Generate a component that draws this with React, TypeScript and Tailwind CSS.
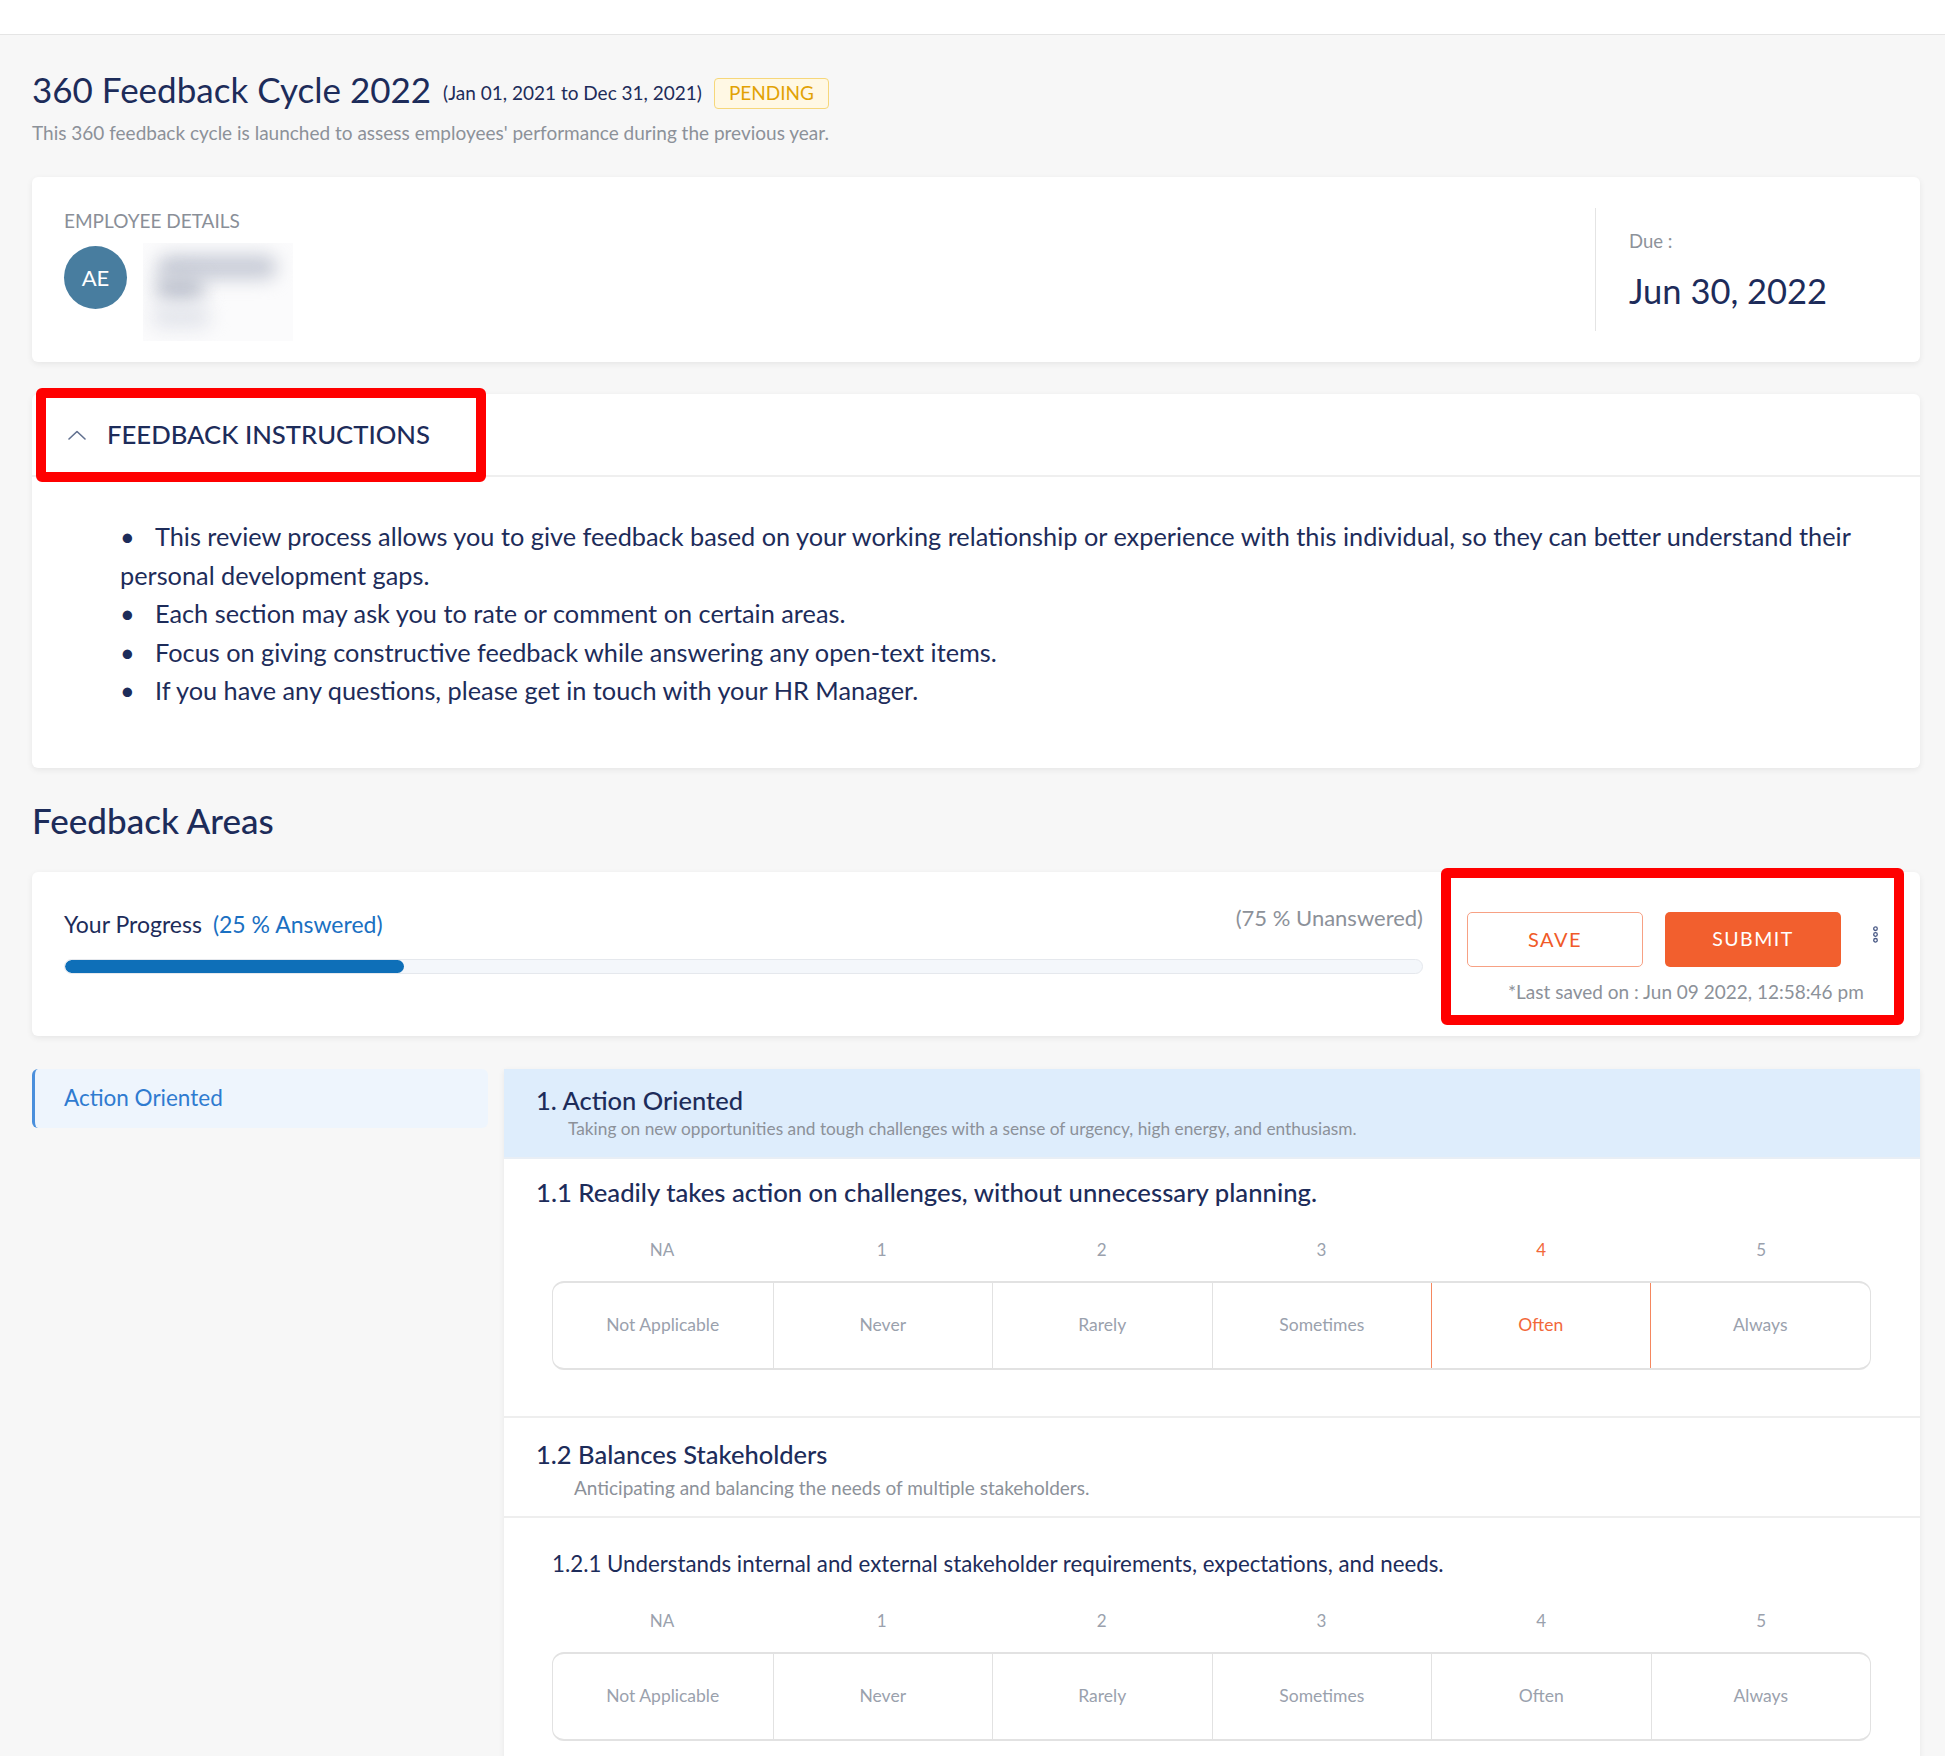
import React from "react";

const navy = "text-[#1d2c5a]";

function RatingRow({ selected }: { selected?: number }) {
  const nums = ["NA", "1", "2", "3", "4", "5"];
  const labels = ["Not Applicable", "Never", "Rarely", "Sometimes", "Often", "Always"];
  return (
    <div className="pl-[48px] pr-[49px]">
      <div className="grid grid-cols-6 h-[31px] items-center">
        {nums.map((n, i) => (
          <div
            key={n}
            className={`text-center text-[17px] ${i === selected ? "text-[#f2683a]" : "text-[#9aa1ad]"}`}
          >
            {n}
          </div>
        ))}
      </div>
      <div className="mt-[15px] grid grid-cols-6 h-[89px] rounded-[12px] border border-[#e2e2e2] border-t-2 border-b-2 overflow-hidden">
        {labels.map((l, i) => (
          <div
            key={l}
            className={`flex items-center justify-center text-[17.5px] ${
              i === selected
                ? "text-[#f2683a] border border-[#f5875f] border-t-2 border-b-2 -mt-[2px] -mb-[2px]"
                : `text-[#9aa1ad] ${i > 0 && i - 1 !== selected ? "border-l border-[#e2e2e2]" : ""}`
            }`}
          >
            {l}
          </div>
        ))}
      </div>
    </div>
  );
}

export default function App() {
  return (
    <div className="min-h-screen bg-[#f7f7f7] font-['Lato','Noto_Sans',sans-serif]">
      <div className="h-[35px] bg-white border-b border-[#e5e5e5]" />
      <div className="pl-[32px] pr-[25px]">
        {/* Title */}
        <div className="pt-[33px] flex items-center">
          <h1 className={`text-[35px] leading-[42px] ${navy}`}>360 Feedback Cycle 2022</h1>
          <span className={`ml-[12px] mt-[8px] text-[19px] ${navy}`}>(Jan 01, 2021 to Dec 31, 2021)</span>
          <span className="ml-[12px] mt-[8px] h-[31px] px-[14px] flex items-center rounded-[4px] border border-[#f6d77a] bg-[#fff8e4] text-[19px] text-[#e2a204]">
            PENDING
          </span>
        </div>
        <p className="mt-[11px] text-[19px] leading-[23px] text-[#8c9199]">
          This 360 feedback cycle is launched to assess employees' performance during the previous year.
        </p>

        {/* Employee card */}
        <div className="mt-[33px] h-[185px] bg-white rounded-[6px] shadow-[0_2px_6px_rgba(0,0,0,0.07)] flex">
          <div className="flex-1 pl-[32px] pt-[32px]">
            <div className="text-[19px] leading-[23px] text-[#8a8f98]">EMPLOYEE DETAILS</div>
            <div className="mt-[11px] flex items-start">
              <div className="mt-[3px] w-[63px] h-[63px] rounded-full bg-[#487d9f] flex items-center justify-center text-white text-[22px]">
                AE
              </div>
              <div className="ml-[16px] w-[150px] h-[98px] bg-[#fbfbfc] relative overflow-hidden">
                <div className="absolute left-[14px] top-[12px] w-[120px] h-[24px] rounded-full bg-[#c7cbd6] blur-[9px]" />
                <div className="absolute left-[12px] top-[30px] w-[50px] h-[30px] rounded-full bg-[#c3c7d2] blur-[9px]" />
                <div className="absolute left-[8px] top-[62px] w-[60px] h-[24px] rounded-full bg-[#e4e6ec] blur-[9px]" />
              </div>
            </div>
          </div>
          <div className="my-[31px] w-px bg-[#e4e4e4]" />
          <div className="w-[324px] pl-[33px] pt-[53px]">
            <div className="text-[18.5px] leading-[22px] text-[#8d929a]">Due :</div>
            <div className={`mt-[18px] text-[34.5px] leading-[42px] ${navy}`}>Jun 30, 2022</div>
          </div>
        </div>

        {/* Instructions card */}
        <div className="mt-[32px] bg-white rounded-[6px] shadow-[0_2px_6px_rgba(0,0,0,0.07)] relative">
          <div className="h-[83px] border-b-2 border-[#efefef] flex items-center pl-[36px]">
            <svg width="18" height="10" viewBox="0 0 18 10" fill="none">
              <path d="M1 9 L9 1.5 L17 9" stroke="#61708f" strokeWidth="1.6" strokeLinejoin="round" strokeLinecap="round" />
            </svg>
            <span className={`ml-[21px] text-[25.7px] font-medium ${navy}`}>FEEDBACK INSTRUCTIONS</span>
          </div>
          <ul className={`pl-[88px] pr-[60px] pt-[40px] pb-[58px] text-[25.3px] leading-[38.5px] ${navy}`}>
            <li>
              <span className="inline-block w-[35px]">•</span>This review process allows you to give feedback based on your working relationship or experience with this individual, so they can better understand their personal development gaps.
            </li>
            <li>
              <span className="inline-block w-[35px]">•</span>Each section may ask you to rate or comment on certain areas.
            </li>
            <li>
              <span className="inline-block w-[35px]">•</span>Focus on giving constructive feedback while answering any open-text items.
            </li>
            <li>
              <span className="inline-block w-[35px]">•</span>If you have any questions, please get in touch with your HR Manager.
            </li>
          </ul>
          <div className="absolute left-[4px] top-[-6px] w-[450px] h-[94px] border-[10px] border-[#ff0000] rounded-[6px] pointer-events-none" />
        </div>

        {/* Feedback Areas */}
        <h2 className={`mt-[31px] text-[35px] leading-[42px] font-medium ${navy}`}>Feedback Areas</h2>

        <div className="mt-[31px] h-[164px] bg-white rounded-[6px] shadow-[0_2px_6px_rgba(0,0,0,0.07)] relative flex">
          <div className="pl-[32px] w-[1391px] pt-[38px]">
            <div className="flex items-start justify-between h-[28px]">
              <div className="text-[23px] leading-[28px]">
                <span className={navy}>Your Progress</span>
                <span className="ml-[11px] text-[#1a70c2]">(25 % Answered)</span>
              </div>
              <div className="text-[22px] leading-[28px] -mt-[6px] text-[#8c9199]">(75 % Unanswered)</div>
            </div>
            <div className="mt-[21px] h-[15px] rounded-full bg-[#f4f7fb] border border-[#e5e8ed] overflow-hidden">
              <div className="h-full rounded-full bg-[#0e6fb8]" style={{ width: "25%" }} />
            </div>
          </div>
          <div className="flex-1 pl-[44px] pt-[40px]">
            <div className="flex items-start">
              <button className="w-[176px] h-[55px] rounded-[5px] border border-[#f7a184] text-[#f05a28] text-[20px] tracking-[1.5px]">
                SAVE
              </button>
              <button className="ml-[22px] w-[176px] h-[55px] rounded-[5px] bg-[#f25f2e] text-white text-[19.5px] tracking-[1.5px]">
                SUBMIT
              </button>
              <svg className="ml-[31px] mt-[14px]" width="7" height="17" viewBox="0 0 7 17" fill="none">
                <circle cx="3.5" cy="2.7" r="1.8" stroke="#4a5a86" strokeWidth="1.3" />
                <circle cx="3.5" cy="8.5" r="1.8" stroke="#4a5a86" strokeWidth="1.3" />
                <circle cx="3.5" cy="14.3" r="1.8" stroke="#4a5a86" strokeWidth="1.3" />
              </svg>
            </div>
            <div className="mt-[13px] pl-[41px] text-[19px] leading-[23px] text-[#8c9199] whitespace-nowrap">
              *Last saved on : Jun 09 2022, 12:58:46 pm
            </div>
          </div>
          <div className="absolute right-[16px] top-[-4px] w-[463px] h-[157px] border-[10px] border-[#ff0000] rounded-[6px] pointer-events-none" />
        </div>

        {/* Areas */}
        <div className="mt-[33px] flex gap-[16px] items-start">
          <div className="w-[456px] h-[59px] rounded-[6px] bg-[#eef5fd] border-l-[3px] border-[#4a8fdc] flex items-center pl-[29px] text-[22.5px] text-[#2f7bd0]">
            Action Oriented
          </div>
          <div className="flex-1 bg-white shadow-[0_2px_6px_rgba(0,0,0,0.07)]">
            <div className="h-[90px] bg-[#deedfc] pl-[32px] pt-[15px] border-b-2 border-[#e8eef5]">
              <div className={`text-[25.5px] leading-[32px] font-medium ${navy}`}>1. Action Oriented</div>
              <div className="pl-[32px] mt-[1px] text-[17.3px] leading-[24px] text-[#8c9199]">
                Taking on new opportunities and tough challenges with a sense of urgency, high energy, and enthusiasm.
              </div>
            </div>
            <div className="pb-[46px] border-b-2 border-[#eeeeee]">
              <div className={`pl-[32px] pt-[17px] text-[25.7px] leading-[32px] font-medium ${navy}`}>
                1.1 Readily takes action on challenges, without unnecessary planning.
              </div>
              <div className="mt-[27px]">
                <RatingRow selected={4} />
              </div>
            </div>
            <div className="h-[100px] border-b-2 border-[#eeeeee] pl-[32px] pt-[20px]">
              <div className={`text-[25.5px] leading-[32px] font-medium ${navy}`}>1.2 Balances Stakeholders</div>
              <div className="pl-[38px] mt-[6px] text-[19px] leading-[24px] text-[#8c9199]">
                Anticipating and balancing the needs of multiple stakeholders.
              </div>
            </div>
            <div className="pb-[40px]">
              <div className={`pl-[48px] pt-[32px] text-[22.3px] leading-[28px] ${navy}`}>
                1.2.1 Understands internal and external stakeholder requirements, expectations, and needs.
              </div>
              <div className="mt-[28px]">
                <RatingRow />
              </div>
            </div>
          </div>
        </div>
      </div>
    </div>
  );
}
